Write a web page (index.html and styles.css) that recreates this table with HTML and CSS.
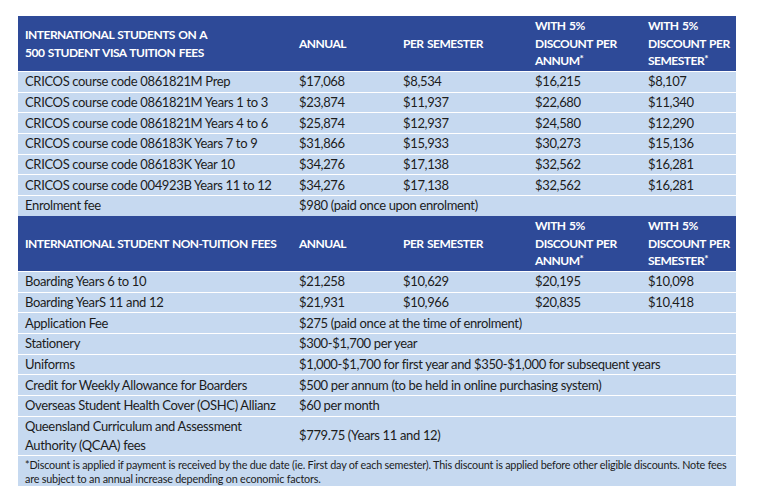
FILE: index.html
```html
<!DOCTYPE html>
<html>
<head>
<meta charset="utf-8">
<link rel="stylesheet" href="styles.css">
</head>
<body>
<table class="fees">
  <colgroup>
    <col class="c1"><col class="c2"><col class="c3"><col class="c4"><col class="c5">
  </colgroup>
  <tr class="head">
    <th>INTERNATIONAL STUDENTS ON A<br>500 STUDENT VISA TUITION FEES</th>
    <th>ANNUAL</th>
    <th>PER SEMESTER</th>
    <th>WITH 5%<br>DISCOUNT PER<br>ANNUM<sup>*</sup></th>
    <th>WITH 5%<br>DISCOUNT PER<br>SEMESTER<sup>*</sup></th>
  </tr>
  <tr><td>CRICOS course code 0861821M Prep</td><td>$17,068</td><td>$8,534</td><td>$16,215</td><td>$8,107</td></tr>
  <tr><td>CRICOS course code 0861821M Years 1 to 3</td><td>$23,874</td><td>$11,937</td><td>$22,680</td><td>$11,340</td></tr>
  <tr><td>CRICOS course code 0861821M Years 4 to 6</td><td>$25,874</td><td>$12,937</td><td>$24,580</td><td>$12,290</td></tr>
  <tr><td>CRICOS course code 086183K Years 7 to 9</td><td>$31,866</td><td>$15,933</td><td>$30,273</td><td>$15,136</td></tr>
  <tr><td>CRICOS course code 086183K Year 10</td><td>$34,276</td><td>$17,138</td><td>$32,562</td><td>$16,281</td></tr>
  <tr><td>CRICOS course code 004923B Years 11 to 12</td><td>$34,276</td><td>$17,138</td><td>$32,562</td><td>$16,281</td></tr>
  <tr><td>Enrolment fee</td><td colspan="4">$980 (paid once upon enrolment)</td></tr>
  <tr class="head">
    <th>INTERNATIONAL STUDENT NON-TUITION FEES</th>
    <th>ANNUAL</th>
    <th>PER SEMESTER</th>
    <th>WITH 5%<br>DISCOUNT PER<br>ANNUM<sup>*</sup></th>
    <th>WITH 5%<br>DISCOUNT PER<br>SEMESTER<sup>*</sup></th>
  </tr>
  <tr><td>Boarding Years 6 to 10</td><td>$21,258</td><td>$10,629</td><td>$20,195</td><td>$10,098</td></tr>
  <tr><td>Boarding YearS 11 and 12</td><td>$21,931</td><td>$10,966</td><td>$20,835</td><td>$10,418</td></tr>
  <tr><td>Application Fee</td><td colspan="4">$275 (paid once at the time of enrolment)</td></tr>
  <tr><td>Stationery</td><td colspan="4">$300-$1,700 per year</td></tr>
  <tr><td>Uniforms</td><td colspan="4">$1,000-$1,700 for first year and $350-$1,000 for subsequent years</td></tr>
  <tr><td>Credit for Weekly Allowance for Boarders</td><td colspan="4">$500 per annum (to be held in online purchasing system)</td></tr>
  <tr><td>Overseas Student Health Cover (OSHC) Allianz</td><td colspan="4">$60 per month</td></tr>
  <tr class="tall"><td>Queensland Curriculum and Assessment<br>Authority (QCAA) fees</td><td colspan="4">$779.75 (Years 11 and 12)</td></tr>
  <tr class="note"><td colspan="5">*Discount is applied if payment is received by the due date (ie. First day of each semester). This discount is applied before other eligible discounts. Note fees are subject to an annual increase depending on economic factors.</td></tr>
</table>
</body>
</html>
```
FILE: styles.css
```css
html, body {
  margin: 0;
  padding: 0;
  background: #ffffff;
}
body {
  padding: 16px 0 0 18px;
  font-family: Lato, "Open Sans", sans-serif;
  color: #1c1c1c;
}
.fees {
  width: 718px;
  table-layout: fixed;
  border-collapse: separate;
  border-spacing: 0;
  background: #c6d9f0;
}
.c1 { width: 274px; }
.c2 { width: 104px; }
.c3 { width: 132px; }
.c4 { width: 113px; }
.c5 { width: 95px; }

.fees th {
  background: #2e4a98;
  color: #ffffff;
  font-weight: 700;
  font-size: 12px;
  letter-spacing: -0.5px;
  word-spacing: 1px;
  line-height: 17.5px;
  text-align: left;
  height: 55px;
  padding: 0 0 0 7px;
  vertical-align: middle;
}
.fees th sup {
  font-size: 10px;
  vertical-align: 3px;
  line-height: 0;
}
.fees td {
  border-top: 1px solid #ffffff;
  height: 19.7px;
  padding: 0 0 0 7px;
  font-size: 13px;
  letter-spacing: -0.35px;
  line-height: 19px;
  vertical-align: middle;
  white-space: nowrap;
}
.fees tr.tall td {
  height: 37px;
}
.fees tr.note td {
  white-space: normal;
  font-size: 10.8px;
  letter-spacing: -0.2px;
  line-height: 14px;
  padding: 2px 6px 4px 7px;
  height: auto;
}
```
